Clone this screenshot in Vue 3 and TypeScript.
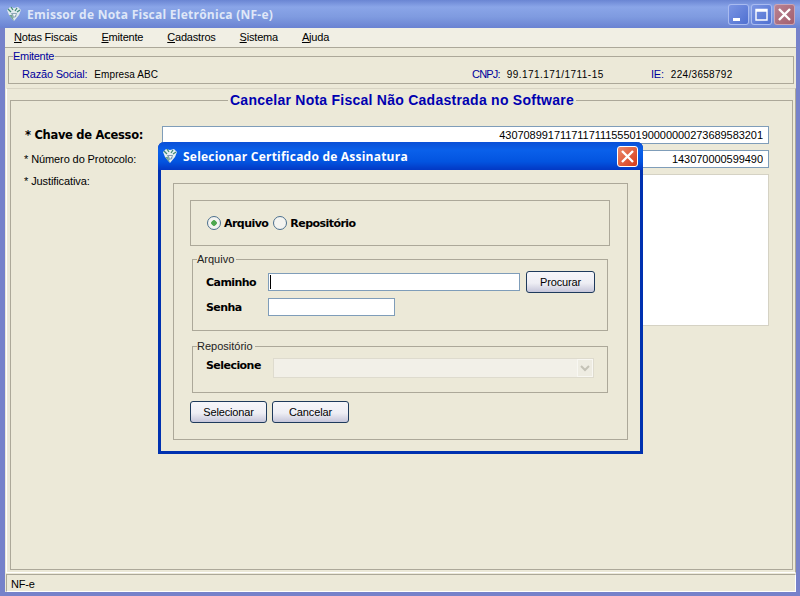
<script setup lang="ts">
import { ref } from 'vue';

const menus = ['Notas Fiscais', 'Emitente', 'Cadastros', 'Sistema', 'Ajuda'];

const chave = ref('43070899171171171115550190000000273689583201');
const protocolo = ref('143070000599490');
const source = ref('arquivo');
</script>

<template>
  <div class="window">
    <header class="titlebar">
      <svg class="appIcon" viewBox="0 0 16 16" width="16" height="16">
        <path d="M1 4 L4 1 L8 2 L12 1 L15 4 L13 9 L8 15 L3 9 Z" fill="#dfe9ee" />
        <path d="M2 3 L5 6 M5 1 L7 4 M11 2 L9 5 M14 4 L11 6" stroke="#3f8a76" stroke-width="1.3" />
        <path d="M5 7 L11 7 L10 11 L7 12 Z" fill="#8fa8b8" />
        <path d="M7 8 L10 8 L8 11 Z" fill="#f4f8f8" />
        <path d="M3 9 L8 15 L6 9 Z" fill="#6fa58f" />
      </svg>
      <span class="titleText">Emissor de Nota Fiscal Eletrônica (NF-e)</span>
      <div class="winButtons">
        <span class="winBtn">
          <svg viewBox="0 0 21 21" width="21" height="21"><rect x="5" y="14" width="7" height="3" fill="#fff" /></svg>
        </span>
        <span class="winBtn">
          <svg viewBox="0 0 21 21" width="21" height="21"><path d="M5 5.5 H16 V16 H5 Z M5 7 H16" fill="none" stroke="#fff" stroke-width="1.4" /></svg>
        </span>
        <span class="winBtn closeInactive">
          <svg viewBox="0 0 21 21" width="21" height="21"><path d="M5 5 L16 16 M16 5 L5 16" stroke="#fff" stroke-width="2.4" /></svg>
        </span>
      </div>
    </header>

    <nav class="menubar">
      <span v-for="item in menus" :key="item" class="menuItem"><u>{{ item[0] }}</u>{{ item.slice(1) }}</span>
    </nav>

    <fieldset class="emitente">
      <legend>Emitente</legend>
      <div class="emitenteRow">
        <div class="pair"><span class="key">Razão Social:</span><span class="val">Empresa ABC</span></div>
        <div class="pair"><span class="key">CNPJ:</span><span class="val">99.171.171/1711-15</span></div>
        <div class="pair"><span class="key">IE:</span><span class="val">224/3658792</span></div>
      </div>
    </fieldset>

    <main class="content">
      <fieldset class="formBox">
        <legend>Cancelar Nota Fiscal Não Cadastrada no Software</legend>
        <div class="formGrid">
          <label class="bigLabel">* Chave de Acesso:</label>
          <input v-model="chave" class="field right" type="text" />
          <label>* Número do Protocolo:</label>
          <input v-model="protocolo" class="field right" type="text" />
          <label class="memoLabel">* Justificativa:</label>
          <textarea class="memo"></textarea>
        </div>
      </fieldset>
    </main>

    <footer class="statusbar">NF-e</footer>

    <section class="dialog">
      <header class="dialogTitle">
        <svg class="appIcon" viewBox="0 0 16 16" width="16" height="16">
          <path d="M1 4 L4 1 L8 2 L12 1 L15 4 L13 9 L8 15 L3 9 Z" fill="#e4eef2" />
          <path d="M2 3 L5 6 M5 1 L7 4 M11 2 L9 5 M14 4 L11 6" stroke="#3f8a76" stroke-width="1.3" />
          <path d="M5 7 L11 7 L10 11 L7 12 Z" fill="#7f9cb4" />
          <path d="M7 8 L10 8 L8 11 Z" fill="#f4f8f8" />
          <path d="M3 9 L8 15 L6 9 Z" fill="#6fa58f" />
        </svg>
        <span class="titleText">Selecionar Certificado de Assinatura</span>
        <span class="dialogClose">
          <svg viewBox="0 0 21 21" width="21" height="21"><path d="M5 5 L16 16 M16 5 L5 16" stroke="#fff" stroke-width="2.4" /></svg>
        </span>
      </header>

      <div class="dialogBody">
        <div class="dialogInner">
          <div class="radioBox">
            <label class="radio"><input v-model="source" type="radio" value="arquivo" />Arquivo</label>
            <label class="radio"><input v-model="source" type="radio" value="repositorio" />Repositório</label>
          </div>

          <fieldset class="group">
            <legend>Arquivo</legend>
            <div class="fileGrid">
              <span class="strong">Caminho</span>
              <div class="pathRow">
                <div class="caretWrap">
                  <input class="field pathInput" type="text" />
                  <span class="caret"></span>
                </div>
                <button type="button" class="xpBtn">Procurar</button>
              </div>
              <span class="strong">Senha</span>
              <input class="field passInput" type="password" />
            </div>
          </fieldset>

          <fieldset class="group repo">
            <legend>Repositório</legend>
            <div class="repoRow">
              <span class="strong repoLabel">Selecione</span>
              <div class="combo">
                <span class="comboArrow">
                  <svg viewBox="0 0 16 18" width="16" height="18"><path d="M4 7 L8 11 L12 7" fill="none" stroke="#c4c2b6" stroke-width="2" /></svg>
                </span>
              </div>
            </div>
          </fieldset>

          <div class="actions">
            <button type="button" class="xpBtn wide">Selecionar</button>
            <button type="button" class="xpBtn wide">Cancelar</button>
          </div>
        </div>
      </div>
    </section>
  </div>
</template>

<style>
html,
body {
  margin: 0;
  background: #ece9d8;
}
</style>

<style scoped>
.window {
  position: relative;
  box-sizing: border-box;
  width: 800px;
  height: 596px;
  display: flex;
  flex-direction: column;
  background: #ece9d8;
  border-left: 5px solid #7682ca;
  border-right: 4px solid #7682ca;
  border-bottom: 4px solid #7682ca;
  font-family: "Liberation Sans", Arial, sans-serif;
  font-size: 11px;
  color: #000;
}

fieldset {
  margin: 0;
  min-width: 0;
  border: 1px solid #aca899;
}

.titlebar {
  height: 28px;
  margin-left: -5px;
  margin-right: -4px;
  padding-left: 6px;
  padding-right: 5px;
  box-sizing: border-box;
  display: flex;
  align-items: center;
  flex: none;
  background: linear-gradient(#6a85d3 0, #8aa5e8 25%, #7f9be0 60%, #6a82d2 100%);
}

.appIcon {
  flex: none;
  margin-right: 5px;
}

.titleText {
  font-family: "Open Sans", sans-serif;
  font-weight: 700;
  font-size: 12px;
  letter-spacing: 0.25px;
  color: #dfe7f8;
}

.winButtons {
  margin-left: auto;
  display: flex;
  gap: 2px;
}

.winBtn {
  box-sizing: border-box;
  width: 21px;
  height: 21px;
  border-radius: 3px;
  background: linear-gradient(135deg, #7d97e4, #4d6ed0);
  box-shadow: inset 0 0 0 1px #a9bbf0;
}

.winBtn svg,
.dialogClose svg {
  display: block;
}

.closeInactive {
  background: linear-gradient(135deg, #b98494, #a25d6c);
  box-shadow: inset 0 0 0 1px #c8a6b8;
}

.menubar {
  height: 19px;
  flex: none;
  display: flex;
  align-items: center;
  gap: 24px;
  padding-left: 9px;
  background: #f1efe4;
  border-bottom: 1px solid #aca899;
  letter-spacing: -0.2px;
}

.menuItem {
  margin-top: -2px;
}

.emitente {
  flex: none;
  height: 34px;
  box-sizing: border-box;
  margin: 2px 2px 0 3px;
  padding: 0;
  background: #ece9d8;
}

.emitente legend {
  padding: 0 1px 0 0;
  margin-left: 4px;
  line-height: 13px;
  letter-spacing: -0.3px;
  color: #00009c;
}

.emitenteRow {
  margin-top: 5px;
  padding-left: 13px;
  display: grid;
  grid-template-columns: 450px 179px auto;
}

.pair {
  display: flex;
  align-items: center;
  gap: 7px;
}

.key {
  color: #00009c;
  letter-spacing: -0.2px;
}

.val {
  font-size: 10px;
  letter-spacing: 0.3px;
}

.pair:nth-child(1) .val {
  letter-spacing: 0.1px;
}

.pair:nth-child(2) .key {
  letter-spacing: -0.8px;
}

.pair:nth-child(2) .val {
  letter-spacing: 0.45px;
}

.content {
  flex: 1;
  min-height: 0;
  margin: 4px 0 0 1px;
  padding: 2px 2px 2px 3px;
  border: 1px solid #fff;
  border-top-color: #d8d4c4;
  border-right: 1px solid #aca899;
  display: flex;
}

.formBox {
  flex: 1;
  box-sizing: border-box;
  padding: 0 23px 0 13px;
}

.formBox legend {
  margin: 0 0 0 204px;
  padding: 0 2px;
  line-height: 18px;
  font-weight: 700;
  font-size: 14px;
  letter-spacing: 0.25px;
  color: #0000b0;
}

.formGrid {
  margin-top: 17px;
  display: grid;
  grid-template-columns: 138px 1fr;
  grid-template-rows: 18px 18px 152px;
  row-gap: 6px;
  align-items: start;
}

.formGrid label {
  line-height: 18px;
  padding-top: 6px;
  margin-top: -6px;
  white-space: nowrap;
  letter-spacing: -0.1px;
}

.formGrid .memoLabel {
  margin-top: 0;
  padding-top: 0;
  line-height: 14px;
}

.formGrid .bigLabel {
  font-family: "DejaVu Sans", sans-serif;
  font-weight: 700;
  font-size: 11.5px;
  margin-left: 1px;
  letter-spacing: -0.3px;
}

.field {
  box-sizing: border-box;
  height: 18px;
  margin: 0;
  padding: 0 5px 0 3px;
  border: 1px solid #7f9db9;
  border-radius: 0;
  outline: none;
  background: #fff;
  font: inherit;
  color: #000;
}

.right {
  width: 100%;
  text-align: right;
  letter-spacing: -0.05px;
}

.memo {
  box-sizing: border-box;
  display: block;
  width: 100%;
  height: 152px;
  margin: 0;
  padding: 0;
  border: 1px solid #d5d2c4;
  background: #fff;
  outline: none;
  resize: none;
}

.statusbar {
  flex: none;
  box-sizing: border-box;
  height: 18px;
  margin-top: 1px;
  margin-left: 1px;
  padding-left: 4px;
  line-height: 19px;
  letter-spacing: -0.2px;
  border: 1px solid #fff;
  border-top-color: #aca899;
  border-left-color: #aca899;
}

/* the dialog floats over the main window */
.dialog {
  position: absolute;
  left: 153px;
  top: 142px;
  box-sizing: border-box;
  width: 485px;
  height: 312px;
  border: 3px solid #0031b0;
  border-top: 0;
  border-radius: 6px 6px 0 0;
  background: #ece9d8;
  display: flex;
  flex-direction: column;
}

.dialogTitle {
  flex: none;
  height: 28px;
  margin: 0 -3px;
  padding: 0 5px 0 4px;
  box-sizing: border-box;
  border-radius: 6px 6px 0 0;
  display: flex;
  align-items: center;
  background: linear-gradient(#0a4fd6 0, #0a60ea 30%, #0354e0 70%, #0338c4 100%);
}

.dialogTitle .titleText {
  color: #fff;
  letter-spacing: 0.22px;
}

.dialogClose {
  margin-left: auto;
  box-sizing: border-box;
  width: 21px;
  height: 21px;
  border-radius: 3px;
  border: 1px solid #fff;
  background: linear-gradient(135deg, #ec8a6c, #d63a18);
}

.dialogClose svg {
  margin: -1px;
}

.dialogBody {
  flex: 1;
  padding: 13px 12px 12px 12px;
  display: flex;
}

.dialogInner {
  flex: 1;
  box-sizing: border-box;
  padding: 16px;
  border: 1px solid #aca899;
}

.radioBox {
  box-sizing: border-box;
  width: 420px;
  height: 46px;
  border: 1px solid #aca899;
  padding-left: 16px;
  display: flex;
  align-items: center;
  gap: 5px;
}

.radio {
  display: flex;
  align-items: center;
  gap: 3px;
  font-family: "DejaVu Sans", sans-serif;
  font-weight: 700;
  font-size: 11px;
  letter-spacing: -0.55px;
}

.radio input {
  appearance: none;
  box-sizing: border-box;
  width: 14px;
  height: 14px;
  margin: 0;
  border: 1px solid #4b6f8e;
  border-radius: 50%;
  background: #f4f4f0;
}

.radio input:checked {
  background: radial-gradient(circle, #4fa84f 0 2.5px, #f4f4f0 3px);
}

.group {
  box-sizing: border-box;
  width: 416px;
  margin: 6px 0 0 2px;
  padding: 5px 13px 14px;
}

.group legend {
  padding: 0 2px 0 0;
  margin-left: -9px;
  line-height: 14px;
  color: #222;
}

.repo {
  margin-top: 8px;
}

.strong {
  font-family: "DejaVu Sans", sans-serif;
  font-weight: 700;
  font-size: 11px;
  letter-spacing: -0.55px;
}

.fileGrid {
  display: grid;
  grid-template-columns: 62px auto;
  row-gap: 5px;
  align-items: center;
  justify-content: start;
}

.pathRow {
  display: flex;
  align-items: center;
  gap: 6px;
}

.caretWrap {
  position: relative;
  display: flex;
}

.pathInput {
  width: 252px;
}

.passInput {
  width: 127px;
}

.caret {
  position: absolute;
  left: 2px;
  top: 2px;
  width: 1px;
  height: 14px;
  background: #000;
}

.xpBtn {
  box-sizing: border-box;
  width: 69px;
  height: 22px;
  margin: 0;
  padding: 0;
  border: 1px solid #1e3a5c;
  border-radius: 3px;
  background: linear-gradient(#f6f6fa, #eeeef4 55%, #c6c6da);
  font: inherit;
  letter-spacing: -0.15px;
  color: #000;
}

.wide {
  width: 77px;
}

.repoRow {
  display: flex;
  align-items: center;
}

.repoLabel {
  width: 67px;
  flex: none;
  margin-top: -5px;
}

.combo {
  box-sizing: border-box;
  width: 321px;
  height: 20px;
  border: 1px solid #dedbce;
  background: #f2f0e8;
  display: flex;
  justify-content: flex-end;
  align-items: center;
}

.comboArrow {
  display: block;
  height: 18px;
  background: #eeece2;
  box-shadow: inset 0 0 0 1px #f8f7f2;
}

.comboArrow svg {
  display: block;
}

.actions {
  margin-top: 8px;
  display: flex;
  gap: 5px;
}
</style>
